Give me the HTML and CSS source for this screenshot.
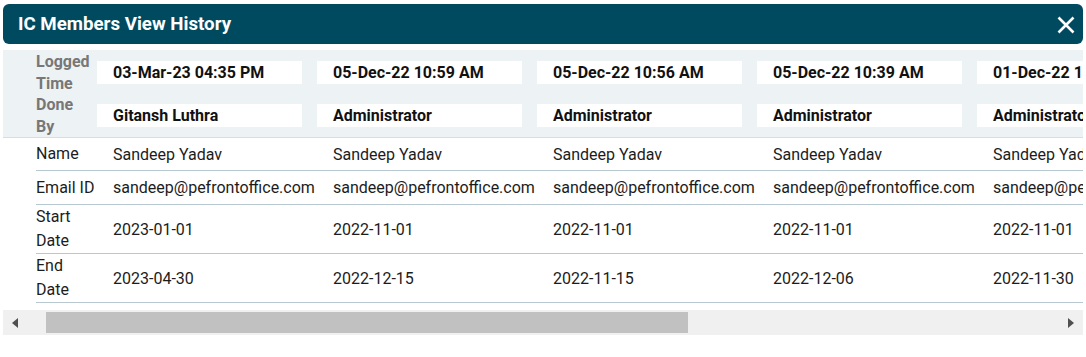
FILE: index.html
```html
<!DOCTYPE html>
<html>
<head>
<meta charset="utf-8">
<link rel="stylesheet" href="styles.css">
</head>
<body>
<div class="dialog">
  <div class="titlebar">
    <span class="title">IC Members View History</span>
    <svg class="close" width="18" height="18" viewBox="0 0 18 18"><path d="M1.5 1.5 L16.5 16.5 M16.5 1.5 L1.5 16.5" stroke="#fff" stroke-width="2.6" fill="none"/></svg>
  </div>
  <div class="viewport">
    <div class="band">
      <div class="band-row r1">
        <div class="hlabel">Logged Time</div>
        <div class="box">03-Mar-23 04:35 PM</div>
        <div class="box">05-Dec-22 10:59 AM</div>
        <div class="box">05-Dec-22 10:56 AM</div>
        <div class="box">05-Dec-22 10:39 AM</div>
        <div class="box">01-Dec-22 11:12 AM</div>
      </div>
      <div class="band-row r2">
        <div class="hlabel">Done By</div>
        <div class="box">Gitansh Luthra</div>
        <div class="box">Administrator</div>
        <div class="box">Administrator</div>
        <div class="box">Administrator</div>
        <div class="box">Administrator</div>
      </div>
    </div>
    <div class="row single">
      <div class="label">Name</div>
      <div class="val">Sandeep Yadav</div>
      <div class="val">Sandeep Yadav</div>
      <div class="val">Sandeep Yadav</div>
      <div class="val">Sandeep Yadav</div>
      <div class="val">Sandeep Yadav</div>
    </div>
    <div class="row single tall">
      <div class="label">Email ID</div>
      <div class="val">sandeep@pefrontoffice.com</div>
      <div class="val">sandeep@pefrontoffice.com</div>
      <div class="val">sandeep@pefrontoffice.com</div>
      <div class="val">sandeep@pefrontoffice.com</div>
      <div class="val">sandeep@pefrontoffice.com</div>
    </div>
    <div class="row double">
      <div class="label">Start Date</div>
      <div class="val">2023-01-01</div>
      <div class="val">2022-11-01</div>
      <div class="val">2022-11-01</div>
      <div class="val">2022-11-01</div>
      <div class="val">2022-11-01</div>
    </div>
    <div class="row double">
      <div class="label">End Date</div>
      <div class="val">2023-04-30</div>
      <div class="val">2022-12-15</div>
      <div class="val">2022-11-15</div>
      <div class="val">2022-12-06</div>
      <div class="val">2022-11-30</div>
    </div>
  </div>
  <div class="scrollbar">
    <div class="sb-btn"><span class="arrow-left"></span></div>
    <div class="sb-track"><div class="sb-thumb"></div></div>
    <div class="sb-btn"><span class="arrow-right"></span></div>
  </div>
</div>
</body>
</html>
```
FILE: styles.css
```css
* { box-sizing: border-box; }
html, body { margin: 0; padding: 0; background: #fff; }
body {
  font-family: Roboto, "Liberation Sans", Arial, sans-serif;
  font-size: 16px;
  color: #1c1c1c;
  width: 1086px;
  height: 357px;
  overflow: hidden;
}
.dialog {
  padding: 4px 3px 0 3px;
}
.titlebar {
  height: 40px;
  background: #004a60;
  border-radius: 6px;
  display: flex;
  align-items: center;
  justify-content: space-between;
  padding: 0 8px 0 15px;
}
.title {
  color: #fff;
  font-weight: 700;
  font-size: 18.7px;
}
.close { display: block; margin-top: 1px; }
.viewport {
  margin-top: 6px;
  overflow: hidden;
  width: 1080px;
}
.band {
  background: #edf2f5;
  padding-left: 33px;
  border-bottom: 1px solid #dadcdd;
  height: 88px;
  width: 1200px;
}
.band-row {
  display: flex;
  align-items: center;
}
.band-row.r1 { height: 45px; }
.band-row.r2 { height: 41px; }
.hlabel {
  width: 61px;
  flex: none;
  padding-right: 5px;
  font-weight: 700;
  color: #777;
  line-height: 22px;
}
.box {
  flex: none;
  width: 205px;
  height: 23px;
  margin-right: 15px;
  background: #fff;
  padding-left: 16px;
  font-weight: 700;
  line-height: 23px;
  color: #111;
  white-space: nowrap;
}
.row {
  display: flex;
  align-items: center;
  margin-left: 33px;
  width: 1200px;
  border-bottom: 1px solid #b7c8d0;
}
.row.single { height: 33px; }
.row.single.tall { height: 34px; }
.row.double { height: 49px; }
.label {
  width: 61px;
  flex: none;
  line-height: 24px;
  color: #1c1c1c;
}
.row.double .label { width: 50px; margin-right: 11px; }
.val {
  flex: none;
  width: 220px;
  padding-left: 16px;
  color: #1c1c1c;
  white-space: nowrap;
}
.scrollbar {
  margin-top: 7px;
  height: 25px;
  width: 1080px;
  background: #f0f0f0;
  display: flex;
  align-items: stretch;
}
.sb-btn {
  width: 24px;
  flex: none;
  display: flex;
  align-items: center;
  justify-content: center;
}
.arrow-left {
  width: 0; height: 0;
  border-top: 5px solid transparent;
  border-bottom: 5px solid transparent;
  border-right: 6px solid #505050;
}
.arrow-right {
  width: 0; height: 0;
  border-top: 5px solid transparent;
  border-bottom: 5px solid transparent;
  border-left: 6px solid #505050;
}
.sb-track {
  flex: 1;
  display: flex;
  align-items: center;
}
.sb-thumb {
  margin-left: 19px;
  width: 642px;
  height: 21px;
  background: #c1c1c1;
}
```
